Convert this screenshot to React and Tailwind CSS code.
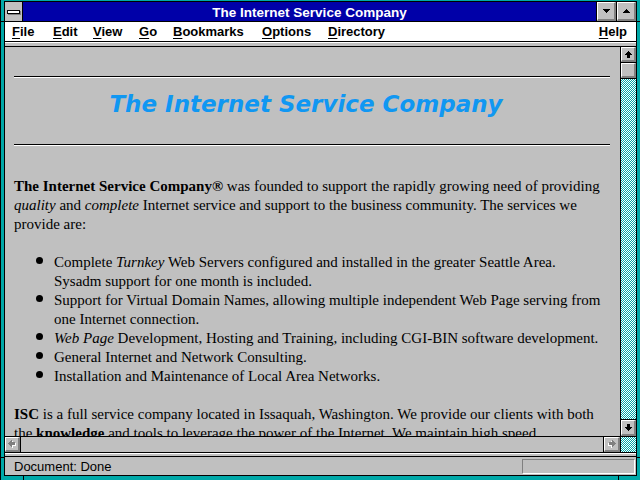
import React from "react";

const ArrowV = ({ down = false, color = "#000" }) => (
  <svg width="7" height="7" viewBox="0 0 7 7" shapeRendering="crispEdges" style={down ? { transform: "rotate(180deg)" } : undefined}>
    <rect x="3" y="0" width="1" height="1" fill={color} />
    <rect x="2" y="1" width="3" height="1" fill={color} />
    <rect x="1" y="2" width="5" height="1" fill={color} />
    <rect x="0" y="3" width="7" height="1" fill={color} />
    <rect x="2" y="4" width="3" height="3" fill={color} />
  </svg>
);

const ArrowH = ({ right = false }) => (
  <svg width="8" height="8" viewBox="0 0 8 8" shapeRendering="crispEdges" style={right ? { transform: "scaleX(-1)" } : undefined}>
    <g fill="#ffffff" transform="translate(1,1)">
      <rect x="0" y="3" width="1" height="1" />
      <rect x="1" y="2" width="1" height="3" />
      <rect x="2" y="1" width="1" height="5" />
      <rect x="3" y="0" width="1" height="7" />
      <rect x="4" y="2" width="3" height="3" />
    </g>
    <g fill="#808080">
      <rect x="0" y="3" width="1" height="1" />
      <rect x="1" y="2" width="1" height="3" />
      <rect x="2" y="1" width="1" height="5" />
      <rect x="3" y="0" width="1" height="7" />
      <rect x="4" y="2" width="3" height="3" />
    </g>
  </svg>
);

const Tri = ({ up = false }) => (
  <svg width="7" height="4" viewBox="0 0 7 4" shapeRendering="crispEdges" style={up ? { transform: "scaleY(-1)" } : undefined}>
    <rect x="0" y="0" width="7" height="1" fill="#000" />
    <rect x="1" y="1" width="5" height="1" fill="#000" />
    <rect x="2" y="2" width="3" height="1" fill="#000" />
    <rect x="3" y="3" width="1" height="1" fill="#000" />
  </svg>
);

const Raised = ({ children, className = "" }) => (
  <div className={"box-border bg-[#c0c0c0] border-t border-l border-t-white border-l-white border-b-2 border-r-2 border-b-[#808080] border-r-[#808080] flex items-center justify-center " + className}>
    {children}
  </div>
);

const M = ({ k, rest, w }) => (
  <span className={"shrink-0 " + (w || "")}>
    <span className="underline underline-offset-[2px]">{k}</span>
    {rest}
  </span>
);

const Bullet = ({ children }) => (
  <li className="flex">
    <span className="shrink-0 w-[40px] flex">
      <span className="ml-[22px] mt-[4px] w-[7px] h-[7px] rounded-full bg-black"></span>
    </span>
    <span>{children}</span>
  </li>
);

export default function App() {
  const dither =
    "bg-[image:repeating-conic-gradient(#00a8a8_0%_25%,#ffffff_0%_50%)] bg-[length:2px_2px]";
  return (
    <div className="relative w-[640px] h-[480px] bg-[#00a8a8] border-l border-l-black pt-[1px] pl-[3px] pr-[3px] pb-[4px] box-border overflow-hidden font-['Liberation_Sans',Arial,sans-serif]">
      {/* frame ticks */}
      <div className="absolute left-0 top-[21px] w-[4px] h-[1px] bg-black"></div>
      <div className="absolute left-0 top-[457px] w-[4px] h-[1px] bg-black"></div>
      <div className="absolute right-0 top-[21px] w-[4px] h-[1px] bg-black"></div>
      <div className="absolute right-0 top-[457px] w-[4px] h-[1px] bg-black"></div>
      <div className="absolute left-[22px] bottom-0 w-[1px] h-[4px] bg-black"></div>
      <div className="absolute left-[617px] bottom-0 w-[1px] h-[4px] bg-black"></div>

      <div className="w-full h-full border border-black box-border flex flex-col bg-[#c0c0c0]">
        {/* Title bar */}
        <div className="h-[20px] shrink-0 flex border-b border-b-black box-border">
          <div className="w-[18px] shrink-0 border-r border-r-black bg-[#c0c0c0] flex items-center justify-center">
            <div className="relative w-[13px] h-[4px] border border-black bg-white box-border shadow-[1px_1px_0_#808080]"></div>
          </div>
          <div className="flex-1 bg-[#0000a8] text-white font-bold text-[13.5px] leading-[19px] text-center pt-[1px]">
            The Internet Service Company
          </div>
          <div className="w-[20px] shrink-0 border-l border-l-black">
            <Raised className="w-full h-full">
              <Tri />
            </Raised>
          </div>
          <div className="w-[20px] shrink-0 border-l border-l-black">
            <Raised className="w-full h-full">
              <Tri up />
            </Raised>
          </div>
        </div>

        {/* Menu bar */}
        <div className="h-[20px] shrink-0 bg-white border-b border-b-black box-border flex text-[13px] font-bold leading-[19px] text-black pl-[7px] pr-[9px]">
          <M k="F" rest="ile" w="w-[41px]" />
          <M k="E" rest="dit" w="w-[40px]" />
          <M k="V" rest="iew" w="w-[46px]" />
          <M k="G" rest="o" w="w-[34px]" />
          <M k="B" rest="ookmarks" w="w-[89px]" />
          <M k="O" rest="ptions" w="w-[66px]" />
          <span className="flex-1">
            <span className="underline underline-offset-[2px]">D</span>irectory
          </span>
          <M k="H" rest="elp" />
        </div>

        {/* stripe */}
        <div className="h-[5px] shrink-0 border-t border-t-white border-b border-b-black bg-[#c0c0c0] box-border"></div>

        {/* main */}
        <div className="h-[406px] shrink-0 flex border-b border-b-black box-border">
          <div className="flex-1 flex flex-col min-w-0">
            <div className="h-[389px] overflow-hidden bg-[#c0c0c0] pt-[29px] pl-[9px]">
              <div className="w-[596px]">
                <div className="h-[2px] border-t border-t-black border-b border-b-white box-border"></div>
                <h1 className="mt-[12px] h-[28px] pr-[12px] leading-[28px] text-center font-['DejaVu_Sans',Verdana,sans-serif] font-bold italic text-[23px] text-[#1097f2]">
                  The Internet Service Company
                </h1>
                <div className="mt-[26px] h-[2px] border-t border-t-black border-b border-b-white box-border"></div>
                <div className="mt-[31px] font-['Liberation_Serif','Times_New_Roman',serif] text-[15px] leading-[19px] text-black whitespace-nowrap">
                  <p>
                    <b>The Internet Service Company®</b> was founded to support the rapidly growing need of providing
                    <br />
                    <i>quality</i> and <i>complete</i> Internet service and support to the business community. The services we
                    <br />
                    provide are:
                  </p>
                  <ul className="mt-[19px]">
                    <Bullet>
                      Complete <i>Turnkey</i> Web Servers configured and installed in the greater Seattle Area.
                      <br />
                      Sysadm support for one month is included.
                    </Bullet>
                    <Bullet>
                      Support for Virtual Domain Names, allowing multiple independent Web Page serving from
                      <br />
                      one Internet connection.
                    </Bullet>
                    <Bullet>
                      <i>Web Page</i> Development, Hosting and Training, including CGI-BIN software development.
                    </Bullet>
                    <Bullet>General Internet and Network Consulting.</Bullet>
                    <Bullet>Installation and Maintenance of Local Area Networks.</Bullet>
                  </ul>
                  <p className="mt-[19px]">
                    <b>ISC</b> is a full service company located in Issaquah, Washington. We provide our clients with both
                    <br />
                    the <b>knowledge</b> and tools to leverage the power of the Internet. We maintain high speed
                  </p>
                </div>
              </div>
            </div>
            {/* horizontal scrollbar */}
            <div className="h-[16px] shrink-0 flex border-t border-t-black box-border bg-[#c0c0c0]">
              <div className="w-[16px] shrink-0 border-r border-r-black box-border">
                <Raised className="w-full h-full">
                  <ArrowH />
                </Raised>
              </div>
              <div className="flex-1"></div>
              <div className="w-[17px] shrink-0 border-l border-l-black box-border">
                <Raised className="w-full h-full">
                  <ArrowH right />
                </Raised>
              </div>
            </div>
          </div>

          {/* vertical scrollbar */}
          <div className="w-[16px] shrink-0 border-l border-l-black box-border flex flex-col">
            <div className="h-[16px] shrink-0 border-b border-b-black box-border">
              <Raised className="w-full h-full">
                <ArrowV />
              </Raised>
            </div>
            <div className="h-[16px] shrink-0 border-b border-b-black box-border">
              <Raised className="w-full h-full"></Raised>
            </div>
            <div className={"flex-1 " + dither}></div>
            <div className="h-[17px] shrink-0 border-t border-t-black box-border">
              <Raised className="w-full h-full">
                <ArrowV down />
              </Raised>
            </div>
            <div className={"h-[16px] shrink-0 border-t border-t-black box-border " + dither}></div>
          </div>
        </div>

        {/* separator */}
        <div className="h-[4px] shrink-0 border-t border-t-white border-b border-b-black bg-[#c0c0c0] box-border"></div>

        {/* status bar */}
        <div className="h-[18px] shrink-0 flex items-start bg-[#c0c0c0]">
          <div className="flex-1 pl-[9px] text-[13px] leading-[18px] text-black pt-[1px]">Document: Done</div>
          <div className="mt-[2px] w-[113px] h-[15px] mr-[1px] border-t border-l border-t-[#808080] border-l-[#808080] border-b border-r border-b-white border-r-white box-border"></div>
        </div>
      </div>
    </div>
  );
}
